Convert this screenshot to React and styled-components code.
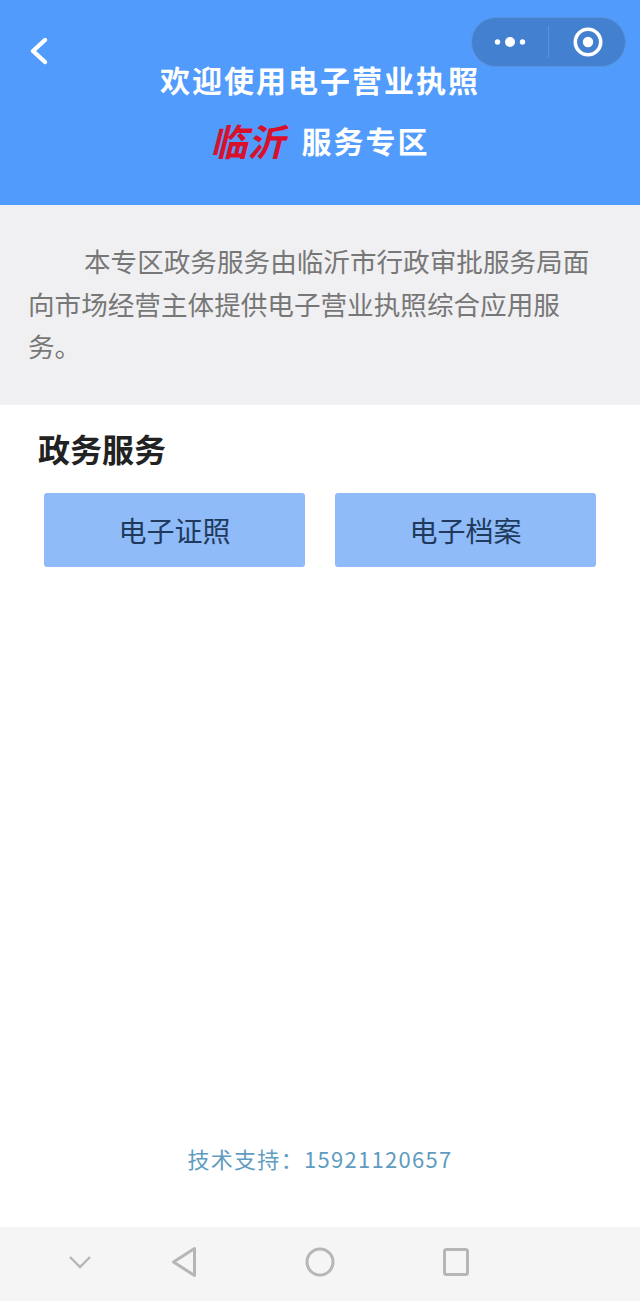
import React from 'react';
import styled, { createGlobalStyle } from 'styled-components';

const GlobalStyle = createGlobalStyle`
	html, body {
		margin: 0;
		padding: 0;
		background: #fff;
	}
	body {
		font-family: 'Noto Sans CJK SC', 'Liberation Sans', sans-serif;
	}
`;

const App = () => {
	return (
		<>
			<GlobalStyle />
			<Page>
				<Header>
					<BackIcon width='22' height='30' viewBox='0 0 22 30'>
						<path d='M17 4 L5 15 L17 26' fill='none' stroke='#fff' strokeWidth='4.4' strokeLinecap='round' strokeLinejoin='round' />
					</BackIcon>
					<Capsule>
						<CapsuleSide>
							<svg width='32' height='12' viewBox='0 0 32 12'>
								<circle cx='3.5' cy='6' r='2.7' fill='#fff' />
								<circle cx='16' cy='6' r='5' fill='#fff' />
								<circle cx='28.5' cy='6' r='2.7' fill='#fff' />
							</svg>
						</CapsuleSide>
						<CapsuleDivider />
						<CapsuleSide>
							<RingIcon width='30' height='30' viewBox='0 0 30 30'>
								<circle cx='15' cy='15' r='12.7' fill='none' stroke='#fff' strokeWidth='3.6' />
								<circle cx='15' cy='15' r='5.2' fill='#fff' />
							</RingIcon>
						</CapsuleSide>
					</Capsule>
					<Title>欢迎使用电子营业执照</Title>
					<Subtitle>
						<City>临沂</City>
						<SubtitleText>服务专区</SubtitleText>
					</Subtitle>
				</Header>

				<Intro>
					<IntroText>本专区政务服务由临沂市行政审批服务局面向市场经营主体提供电子营业执照综合应用服务。</IntroText>
				</Intro>

				<Main>
					<SectionTitle>政务服务</SectionTitle>
					<ButtonRow>
						<ServiceButton>电子证照</ServiceButton>
						<ServiceButton>电子档案</ServiceButton>
					</ButtonRow>
				</Main>

				<Support>技术支持：15921120657</Support>

				<NavBar>
					<NavSlot>
						<svg width='26' height='16' viewBox='0 0 26 16'>
							<path d='M3 3 L13 13 L23 3' fill='none' stroke='#b6b6b6' strokeWidth='2.4' />
						</svg>
					</NavSlot>
					<NavSlot>
						<svg width='26' height='32' viewBox='0 0 26 32'>
							<path d='M23.5 2.5 L2.5 16 L23.5 29.5 Z' fill='none' stroke='#b6b6b6' strokeWidth='3' strokeLinejoin='round' />
						</svg>
					</NavSlot>
					<NavSlot>
						<svg width='30' height='30' viewBox='0 0 30 30'>
							<circle cx='15' cy='15' r='13' fill='none' stroke='#b6b6b6' strokeWidth='3' />
						</svg>
					</NavSlot>
					<NavSlot>
						<svg width='26' height='28' viewBox='0 0 26 28'>
							<rect x='1.5' y='1.5' width='23' height='25' rx='2' fill='none' stroke='#b6b6b6' strokeWidth='3' />
						</svg>
					</NavSlot>
				</NavBar>
			</Page>
		</>
	);
};

const Page = styled.div`
	display: flex;
	flex-direction: column;
	width: 640px;
	height: 1301px;
	overflow: hidden;
	background: #fff;
`;

const Header = styled.header`
	position: relative;
	box-sizing: border-box;
	height: 205px;
	padding-top: 57px;
	background: #519bfd;
	display: flex;
	flex-direction: column;
	align-items: center;
	color: #fff;
`;

const BackIcon = styled.svg`
	position: absolute;
	left: 28px;
	top: 36px;
`;

const Capsule = styled.div`
	position: absolute;
	left: 471px;
	top: 17px;
	box-sizing: border-box;
	width: 155px;
	height: 50px;
	border-radius: 25px;
	border: 1px solid #5a93de;
	background: #4381d0;
	display: flex;
	align-items: center;
`;

const CapsuleSide = styled.div`
	flex: 1;
	display: flex;
	justify-content: center;
	align-items: center;
`;

const RingIcon = styled.svg`
	margin-left: 2px;
`;

const CapsuleDivider = styled.div`
	width: 1px;
	height: 32px;
	background: #5b93db;
`;

const Title = styled.h1`
	margin: 0;
	font-size: 30px;
	line-height: 44px;
	font-weight: 700;
	letter-spacing: 2px;
`;

const Subtitle = styled.div`
	display: flex;
	align-items: center;
	gap: 17px;
	margin-top: 16px;
`;

const City = styled.span`
	font-size: 37px;
	line-height: 46px;
	font-weight: 700;
	font-style: italic;
	color: #d8102c;
`;

const SubtitleText = styled.span`
	font-size: 30px;
	line-height: 46px;
	font-weight: 700;
	letter-spacing: 2px;
`;

const Intro = styled.section`
	box-sizing: border-box;
	height: 200px;
	padding: 35px 48px 0 28px;
	background: #f0f0f2;
`;

const IntroText = styled.p`
	margin: 0;
	font-size: 26.6px;
	line-height: 42.5px;
	text-indent: 56px;
	color: #777;
`;

const Main = styled.main`
	flex: 1;
	padding: 20px 44px 0;
`;

const SectionTitle = styled.h2`
	margin: 0 0 0 -6px;
	font-size: 32px;
	line-height: 46px;
	font-weight: 700;
	color: #222;
`;

const ButtonRow = styled.div`
	display: flex;
	gap: 30px;
	margin-top: 22px;
	width: 552px;
`;

const ServiceButton = styled.div`
	flex: 1;
	height: 74px;
	border-radius: 3px;
	background: #8fbbf9;
	color: #1f3a5c;
	font-size: 28px;
	display: flex;
	align-items: center;
	justify-content: center;
`;

const Support = styled.div`
	height: 85px;
	text-align: center;
	font-size: 22px;
	line-height: 32px;
	letter-spacing: 1.3px;
	color: #5f9cc0;
`;

const NavBar = styled.nav`
	box-sizing: border-box;
	height: 74px;
	padding: 0 0 4px 28px;
	background: #f5f5f6;
	display: grid;
	grid-template-columns: 104px 104px 168px 104px;
	align-items: center;
`;

const NavSlot = styled.div`
	display: flex;
	justify-content: center;
	align-items: center;
`;

export default App;
